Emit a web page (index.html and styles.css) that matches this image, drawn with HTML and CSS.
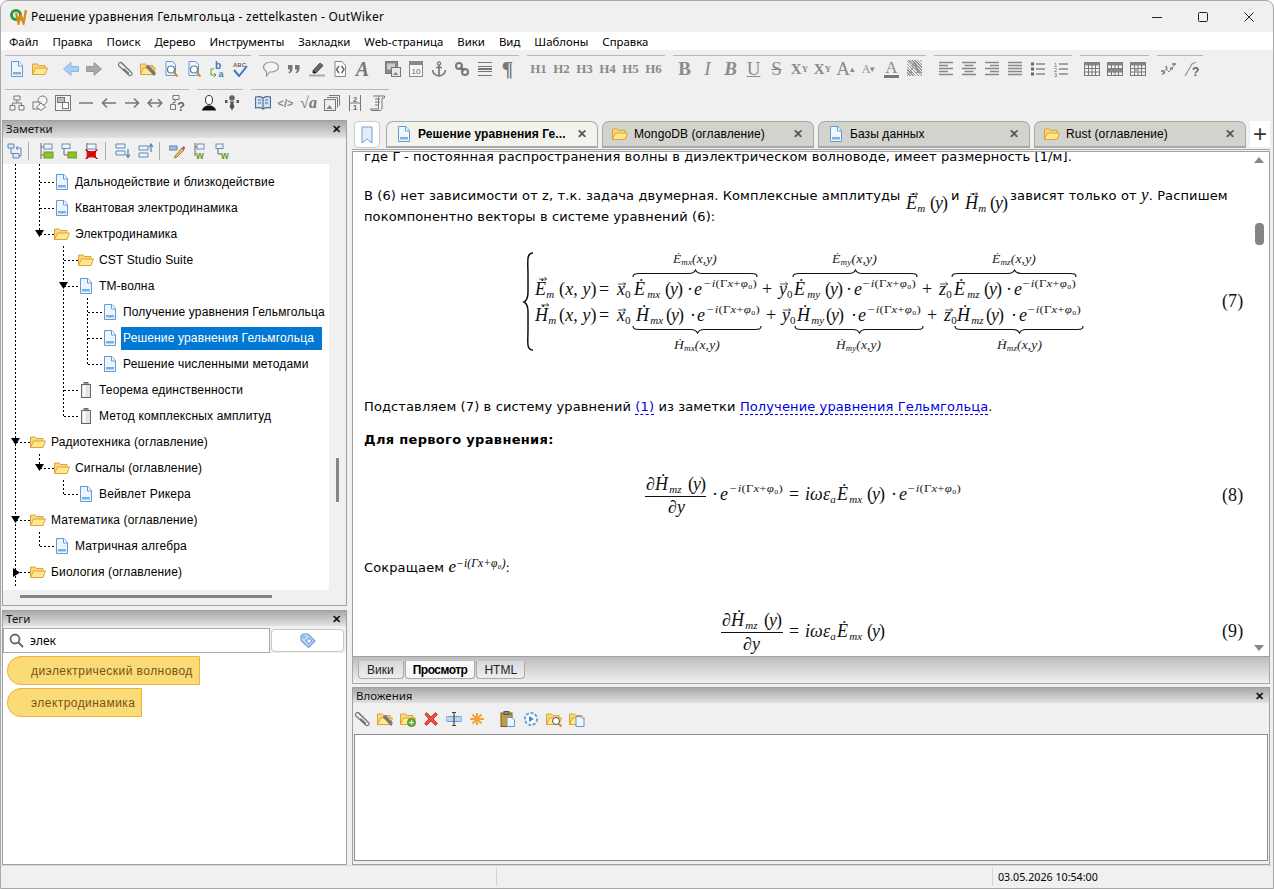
FILE: index.html
```html
<!DOCTYPE html>
<html lang="ru">

<head>
    <meta charset="UTF-8">
    <title>Решение уравнения Гельмгольца - zettelkasten - OutWiker</title>
    <link rel="stylesheet" href="styles.css">
</head>

<body>
    <!-- shared icons -->
    <svg class="defs" width="0" height="0">
        <defs>
            <symbol id="page" viewBox="0 0 16 16"><path d="M2.500 .5h7.500l3.500 4v11h-11z" fill="#eef5fd" stroke="#5f9bd8"/><path d="M9.500 .5v4.500h4" fill="#fff" stroke="#5f9bd8"/><rect x="4" y="11" width="8" height="2.500" fill="#7fb0e2"/></symbol>
            <symbol id="folder" viewBox="0 0 16 16"><path d="M.5 13.500V3h5l1 1.500h6.500V7" fill="#f8d878" stroke="#e0a238"/><path d="M.5 13.500 3.500 7h12L13 13.500z" fill="#ffe88f" stroke="#e0a238"/></symbol>
            <symbol id="cell" viewBox="0 0 16 16"><rect x="6" y=".5" width="4" height="2" fill="#999" stroke="#666"/><rect x="3.500" y="2.500" width="9" height="13" fill="#e4e4e4" stroke="#666"/><rect x="5" y="3.500" width="2.500" height="11" fill="#fbfbfb"/></symbol>
            <symbol id="left" viewBox="0 0 16 16"><path d="M8 1.500 .5 8 8 14.500V10.500h7.500v-5H8z" fill="#a9cdf3" stroke="#8ab8e8"/></symbol>
            <symbol id="right" viewBox="0 0 16 16"><path d="M8 1.500 15.500 8 8 14.500V10.500H.5v-5H8z" fill="#a8a8a8" stroke="#999"/></symbol>
            <symbol id="clip" viewBox="0 0 16 16"><path d="M4 1.500 14.500 11.500c1.500 2-1 4-2.500 2.800L2 5C.5 3 3 .5 5 2l9 9M6.500 7.500l5.500 5" fill="none" stroke="#777" stroke-width="1.200"/></symbol>
            <symbol id="clipfolder" viewBox="0 0 16 16"><use href="#folder"/><path d="M6 5.500l8.500 9M8 4.500l7.500 8M7 5l8 9" stroke="#777" stroke-width="1.300"/></symbol>
            <symbol id="find" viewBox="0 0 16 16"><path d="M3 .5h6.500l3 3v11H3z" fill="#eef5fd" stroke="#5f9bd8"/><circle cx="8" cy="8.500" r="3.500" fill="#fff" stroke="#5f7f9f" stroke-width="1.200"/><path d="M10.500 11 14.500 15.500" stroke="#d98a2b" stroke-width="2"/></symbol>
            <symbol id="bubble" viewBox="0 0 16 16"><path d="M8 1c4.200 0 7.500 2.200 7.500 5s-3.300 5-7.500 5H6.500L3.500 15v-4.500C1.500 9.500.5 7.800.5 6 .5 3.200 3.800 1 8 1z" fill="#f4f4f4" stroke="#999" stroke-width="1.200"/></symbol>
            <symbol id="quote" viewBox="0 0 16 16"><path d="M2 4h4.500v4C6.500 10 5 12 3 12.500L2.500 11.300C3.500 10.800 4 10 4 8.500H2zM9 4h4.500v4c0 2-1.500 4-3.500 4.500l-.5-1.200c1-.5 1.500-1.300 1.500-2.800H9z" fill="#777"/></symbol>
            <symbol id="pen" viewBox="0 0 16 16"><path d="M4 9.500 11 2l3 2.500-7 7.500H4z" fill="#666" stroke="#555"/><path d="M4 9.500V12h3z" fill="#111"/><rect x="0" y="13.500" width="16" height="2" fill="#aaa"/></symbol>
            <symbol id="codepage" viewBox="0 0 16 16"><path d="M3 .5h7l3.500 4v11H3z" fill="#fafafa" stroke="#888"/><path d="M7 5 4.500 8.500 7 12M9.500 5 12 8.500 9.500 12" fill="none" stroke="#666" stroke-width="1.400"/></symbol>
            <symbol id="picture" viewBox="0 0 16 16"><rect x=".5" y=".5" width="12" height="12" fill="#888" stroke="#777"/><rect x="2" y="2.500" width="8" height="6" fill="#ccc"/><rect x="6.500" y="6.500" width="9" height="9" fill="#e8e8e8" stroke="#777"/><path d="M8 14l2.500-3 3 3z" fill="#888"/></symbol>
            <symbol id="calendar" viewBox="0 0 16 16"><rect x="1.500" y=".5" width="13" height="15" fill="#f6f6f6" stroke="#888"/><rect x="1.500" y=".5" width="13" height="3.500" fill="#888"/><text x="8" y="13" class="ic-tx" font-size="8" text-anchor="middle">10</text></symbol>
            <symbol id="anchor" viewBox="0 0 16 16"><circle cx="8" cy="2.500" r="1.600" fill="none" stroke="#777" stroke-width="1.300"/><path d="M8 4v11M5 6.500h6M1.500 9c.5 3.500 3 5.500 6.500 6 3.500-.5 6-2.500 6.500-6" fill="none" stroke="#777" stroke-width="1.700"/></symbol>
            <symbol id="link" viewBox="0 0 16 16"><circle cx="5" cy="5" r="3" fill="none" stroke="#777" stroke-width="2"/><circle cx="11" cy="11" r="3" fill="none" stroke="#777" stroke-width="2"/><path d="M6 6l4 4" stroke="#777" stroke-width="3"/></symbol>
            <symbol id="rule" viewBox="0 0 16 16"><path d="M1 1.500h14M1 5.500h14M1 10.500h14M1 14.500h14" stroke="#777"/><path d="M1 8h14" stroke="#777" stroke-width="2"/></symbol>
            <symbol id="al" viewBox="0 0 16 16"><path d="M1 1.500h14M1 4.500h9M1 7.500h14M1 10.500h9M1 13.500h14" stroke="#888" stroke-width="1.400"/></symbol>
            <symbol id="ac" viewBox="0 0 16 16"><path d="M1 1.500h14M3.500 4.500h9M1 7.500h14M3.500 10.500h9M1 13.500h14" stroke="#888" stroke-width="1.400"/></symbol>
            <symbol id="ar" viewBox="0 0 16 16"><path d="M1 1.500h14M6 4.500h9M1 7.500h14M6 10.500h9M1 13.500h14" stroke="#888" stroke-width="1.400"/></symbol>
            <symbol id="aj" viewBox="0 0 16 16"><path d="M1 1.500h14M1 4.500h14M1 7.500h14M1 10.500h14M1 13.500h14" stroke="#888" stroke-width="1.400"/></symbol>
            <symbol id="ul" viewBox="0 0 16 16"><path d="M6 3h9M6 8h9M6 13h9" stroke="#888" stroke-width="1.400"/><path d="M1 1.500h3v3H1zM1 6.500h3v3H1zM1 11.500h3v3H1z" fill="#666"/></symbol>
            <symbol id="ol" viewBox="0 0 16 16"><path d="M6 3h9M6 8h9M6 13h9" stroke="#888" stroke-width="1.400"/><text x="1" y="5.500" class="ic-tx" font-size="5.500">1</text><text x="1" y="10.500" class="ic-tx" font-size="5.500">2</text><text x="1" y="15.500" class="ic-tx" font-size="5.500">3</text></symbol>
            <symbol id="table" viewBox="0 0 16 16"><rect x=".5" y="1.500" width="15" height="13" fill="#f4f4f4" stroke="#777"/><rect x=".5" y="1.500" width="15" height="3" fill="#888"/><path d="M4.500 2v12M8 2v12M11.500 2v12M1 7.500h14M1 11h14" stroke="#777"/></symbol>
            <symbol id="tablerow" viewBox="0 0 16 16"><use href="#table"/><rect x="1" y="7.500" width="14" height="3.500" fill="#888"/></symbol>
            <symbol id="tablecell" viewBox="0 0 16 16"><use href="#table"/><rect x="4.500" y="7.500" width="3.500" height="3.500" fill="#aaa"/></symbol>
            <symbol id="chart" viewBox="0 0 16 16"><path d="M1 14 5 8l3 3 6-8" fill="none" stroke="#888"/><path d="M0 10h3M5 5l1 3M11 3h4M2 13l2-2M9 7l3 1" stroke="#777" stroke-width="1.500"/></symbol>
            <symbol id="charthelp" viewBox="0 0 16 16"><path d="M1 15 8 3l4-2" fill="none" stroke="#999" stroke-width="1.300"/><text x="8" y="15" class="ic-tx" font-size="12" font-weight="700">?</text></symbol>
            <symbol id="tree" viewBox="0 0 16 16"><path d="M5 1h6v4H5zM1 10.500h5v4.500H1zM10 10.500h5v4.500h-5z" fill="#f4f4f4" stroke="#777"/><path d="M8 5v3M3.500 10.500V8h9v2.500" fill="none" stroke="#777"/></symbol>
            <symbol id="shapes" viewBox="0 0 16 16"><circle cx="10.500" cy="5.500" r="4.500" fill="#f4f4f4" stroke="#777"/><rect x="1" y="7" width="7" height="7" fill="#f4f4f4" stroke="#777"/><path d="M9 8l4.500 4L9 15.500 4.500 12z" fill="#f4f4f4" stroke="#777"/></symbol>
            <symbol id="frames" viewBox="0 0 16 16"><rect x=".5" y=".5" width="15" height="15" fill="#f4f4f4" stroke="#777"/><rect x="2.500" y="2.500" width="7" height="5" fill="#bbb" stroke="#777"/><rect x="7.500" y="7.500" width="6" height="6" fill="#fff" stroke="#777"/></symbol>
            <symbol id="dash" viewBox="0 0 16 16"><path d="M1 8h14" stroke="#777" stroke-width="1.600"/></symbol>
            <symbol id="aleft" viewBox="0 0 16 16"><path d="M1 8h14M6 3.500 1.500 8 6 12.500" fill="none" stroke="#777" stroke-width="1.600"/></symbol>
            <symbol id="aright" viewBox="0 0 16 16"><path d="M1 8h14M10 3.500 14.500 8 10 12.500" fill="none" stroke="#777" stroke-width="1.600"/></symbol>
            <symbol id="both" viewBox="0 0 16 16"><path d="M1 8h14M5 4 1.200 8 5 12M11 4l3.800 4L11 12" fill="none" stroke="#777" stroke-width="1.600"/></symbol>
            <symbol id="treehelp" viewBox="0 0 16 16"><path d="M3 .5h6v4H3zM.5 9.500h5v5h-5z" fill="#f4f4f4" stroke="#777"/><path d="M5 4.500v3H3v2" fill="none" stroke="#777"/><text x="7" y="15.500" class="ic-tx" font-size="13" font-weight="700">?</text></symbol>
            <symbol id="person" viewBox="0 0 16 16"><ellipse cx="8" cy="5" rx="3.500" ry="4.500" fill="#fff" stroke="#333"/><path d="M1 15.500c0-2.500 2-3.500 5-5h4c3 1.500 5 2.500 5 5z" fill="#111"/></symbol>
            <symbol id="tie" viewBox="0 0 16 16"><circle cx="8" cy="3" r="2.800" fill="#666"/><path d="M5.500 6.500h5l-1.200 2 1.200 3-2.500 4-2.500-4 1.200-3z" fill="#555"/><path d="M1 5h2.500v3H1zM12.500 5H15v3h-2.500z" fill="#555"/></symbol>
            <symbol id="book" viewBox="0 0 16 16"><path d="M8 3C6 1.500 3 1.500 .5 2v11c2.500-.5 5.500-.5 7.500 1 2-1.500 5-1.500 7.500-1V2C13 1.500 10 1.500 8 3zM8 3v11" fill="#d4e3f4" stroke="#4e6f94" stroke-width="1.200"/><path d="M3 5h3M3 8h3M10 5h3M10 8h3" stroke="#4e6f94"/></symbol>
            <symbol id="tag" viewBox="0 0 16 16"><path d="M1 3 3 1h5l7 7-6.500 6.500-7.500-7z" fill="#bcd7f2" stroke="#6aa0d8" stroke-width="1.200"/><rect x="7" y="6" width="4" height="4" transform="rotate(45 9 8)" fill="#fff" stroke="#6aa0d8"/><circle cx="4" cy="4" r="1" fill="#fff" stroke="#6aa0d8"/></symbol>
            <symbol id="copies" viewBox="0 0 16 16"><path d="M5 .5h10.500v10" fill="none" stroke="#777"/><path d="M3 2.500h10.500v10" fill="none" stroke="#777"/><rect x=".5" y="4.500" width="11" height="11" fill="#eee" stroke="#777"/><path d="M2.500 14l3-4 3 4z" fill="#888"/></symbol>
            <symbol id="scroll" viewBox="0 0 16 16"><path d="M3 1h11.500v2H12v10c0 1.500-1 2.500-2 2.500H2c-1 0-1.500-.5-1.500-1.500h8V3c0-1 .5-2 1.500-2" fill="#f4f4f4" stroke="#777"/><path d="M5 4h5M5 7h5M5 10h3" stroke="#777"/></symbol>
            <symbol id="steps" viewBox="0 0 16 16"><path d="M2.500 0v16M13.500 0v16M2.500 8h11" stroke="#777"/><text x="8" y="7" class="ic-tx" font-size="7.500" text-anchor="middle" font-weight="700">2</text><text x="8" y="15" class="ic-tx" font-size="7.500" text-anchor="middle" font-weight="700">1</text></symbol>
            <symbol id="nt-swap" viewBox="0 0 16 16"><path d="M1 1h6v4H1zM6 10.500h6v4.500H6z" fill="#dbe9f8" stroke="#5f88b5"/><path d="M4 5v5.500h2M9 5h5v8h-2M11 3l-2 2 2 2" fill="none" stroke="#5f88b5"/></symbol>
            <symbol id="nt-sibling" viewBox="0 0 16 16"><path d="M3 0v16M3 4h3M3 12h3" stroke="#666"/><rect x="6" y="1" width="8" height="5" fill="#eef4fb" stroke="#6c8db0"/><rect x="6" y="9" width="9" height="6" fill="#8dc22b" stroke="#6c9a20"/></symbol>
            <symbol id="nt-child" viewBox="0 0 16 16"><path d="M3 5v7h4" fill="none" stroke="#666"/><rect x="1" y="1" width="8" height="4.500" fill="#eef4fb" stroke="#6c8db0"/><rect x="7" y="9" width="9" height="6" fill="#8dc22b" stroke="#6c9a20"/></symbol>
            <symbol id="nt-del" viewBox="0 0 16 16"><path d="M3 0v16" stroke="#666"/><rect x="3" y="1" width="9" height="5" fill="#eef4fb" stroke="#6c8db0"/><rect x="3" y="8" width="9" height="6.500" fill="#e31212"/><path d="M1.500 6.500 13.500 16M13.500 6.500 1.500 16" stroke="#c00" stroke-width="1.300"/></symbol>
            <symbol id="nt-down" viewBox="0 0 16 16"><path d="M1 1h9v4H1zM1 8h9v4H1z" fill="#eef4fb" stroke="#5f88b5"/><path d="M13 6v7M11 11.500l2 3 2-3" fill="none" stroke="#5f88b5" stroke-width="1.300"/></symbol>
            <symbol id="nt-up" viewBox="0 0 16 16"><path d="M1 3h9v4H1zM1 10h9v4H1z" fill="#eef4fb" stroke="#5f88b5"/><path d="M13 9V2M11 4l2-3 2 3" fill="none" stroke="#5f88b5" stroke-width="1.300"/></symbol>
            <symbol id="nt-edit" viewBox="0 0 16 16"><path d="M0 3h8v4H0z" fill="#9cc1e8" stroke="#5f88b5"/><path d="M6 13 13 5l2 2-7 7-2.500 1z" fill="#f2c14a" stroke="#8a6a20" stroke-width=".8"/><path d="M13 5l2-2 1 2-1 2z" fill="#b12fb1"/></symbol>
            <symbol id="nt-wsib" viewBox="0 0 16 16"><path d="M3 0v13M3 4h2" stroke="#666"/><rect x="5" y="1" width="7" height="5" fill="#eef4fb" stroke="#6c8db0"/><text x="4" y="16" class="ic-tx ic-green" font-size="10" font-weight="700">w</text></symbol>
            <symbol id="nt-wchild" viewBox="0 0 16 16"><path d="M3 5v6h3" fill="none" stroke="#666"/><rect x="1" y="1" width="7" height="4.500" fill="#eef4fb" stroke="#6c8db0"/><text x="6" y="16" class="ic-tx ic-green" font-size="10" font-weight="700">w</text></symbol>
            <symbol id="at-new" viewBox="0 0 16 16"><use href="#folder"/><circle cx="11.500" cy="11.500" r="4" fill="#6bb83a" stroke="#4b8a26"/><path d="M9.500 11.500h4M11.500 9.500v4" stroke="#fff"/></symbol>
            <symbol id="at-del" viewBox="0 0 16 16"><path d="M2 3.500 3.500 1.500 8 6l4.500-4.500L14.500 3.500 10 8l4.500 4.500-2 2L8 10l-4.500 4.500-2-2L6 8z" fill="#ee4d44" stroke="#d33"/></symbol>
            <symbol id="at-rename" viewBox="0 0 16 16"><rect x="0" y="5.500" width="16" height="5" rx="1.500" fill="#bcd7f2" stroke="#6aa0d8"/><path d="M8 1.500v13M6 1.500h4M6 14.500h4" stroke="#444" stroke-width="1.200"/></symbol>
            <symbol id="at-star" viewBox="0 0 16 16"><path d="M8 2v12M1 8h14M3.500 3.500l9 9M12.500 3.500l-9 9" stroke="#f2a33a" stroke-width="2"/></symbol>
            <symbol id="at-paste" viewBox="0 0 16 16"><rect x="1" y="2" width="11" height="13.500" fill="#c79a42" stroke="#7a5a1c"/><rect x="4" y=".5" width="5" height="3" fill="#888" stroke="#555"/><path d="M7 6.500h5l2.500 2.500v6.500H7z" fill="#eef5fd" stroke="#5f9bd8"/></symbol>
            <symbol id="at-run" viewBox="0 0 16 16"><circle cx="8" cy="8" r="6" fill="#fff" stroke="#6aa0d8" stroke-width="2" stroke-dasharray="3 1.500"/><path d="M6 5l5 3-5 3z" fill="#4a86c8"/></symbol>
            <symbol id="at-find" viewBox="0 0 16 16"><use href="#folder"/><circle cx="10" cy="10" r="3.500" fill="#fff" stroke="#555"/><path d="M12.500 12.500l3 3" stroke="#d98a2b" stroke-width="2"/></symbol>
            <symbol id="at-copy" viewBox="0 0 16 16"><use href="#folder"/><path d="M7 5.500h5l3 3v7H7z" fill="#eef5fd" stroke="#5f9bd8"/></symbol>

            <path id="vec" d="M-4 0H3.500M1.500-1.800 3.800 0 1.500 1.800" fill="none" stroke="#111" stroke-width=".7"/>
            <text id="exp" class="m-sup" y="0" textLength="54" lengthAdjust="spacingAndGlyphs">−i<tspan class="up">(Γ</tspan>x<tspan class="up">+</tspan>φ<tspan class="up">₀)</tspan></text>
            <text id="py" class="m m-py"><tspan class="up">(</tspan>y<tspan class="up">)</tspan></text>
            <text id="xy" class="m"><tspan class="up">(</tspan>x, y<tspan class="up">)</tspan></text>
            <path id="bracetop" d="M0 5C0 1.500 3 1.500 6 1.500H56C59 1.500 61 1 62.500 -2 64 1 66 1.500 69 1.500H118C122 1.500 124 1.500 124 5" fill="none" stroke="#111" stroke-width="1.200"/>
            <path id="bracebot" d="M0-5C0-1.500 3-1.500 6-1.500H58C61-1.500 63-1 64.500 2 66-1 68-1.500 71-1.500H122C126-1.500 128-1.500 128-5" fill="none" stroke="#111" stroke-width="1.200"/>
        </defs>
    </svg>

    <div class="window">
        <header class="titlebar">
            <svg class="app-logo" viewBox="0 0 17 17" width="17" height="17"><circle cx="6" cy="7" r="4.500" fill="none" stroke="#2f9a3c" stroke-width="3"/><path d="M6 5 8.500 15 11 8l2.500 7L16 2" fill="none" stroke="#d98a1f" stroke-width="2.400"/></svg>
            <span class="title-text">Решение уравнения Гельмгольца - zettelkasten - OutWiker</span>
            <div class="win-buttons">
                <span class="win-btn"><svg width="12" height="12" viewBox="0 0 12 12"><path d="M1 6.500h10" stroke="#222"/></svg></span>
                <span class="win-btn"><svg width="12" height="12" viewBox="0 0 12 12"><rect x="1.500" y="1.500" width="9" height="9" rx="1" fill="none" stroke="#222"/></svg></span>
                <span class="win-btn"><svg width="12" height="12" viewBox="0 0 12 12"><path d="M1.500 1.500l9 9M10.500 1.500l-9 9" stroke="#222"/></svg></span>
            </div>
        </header>

        <nav class="menubar">
            <span>Файл</span><span>Правка</span><span>Поиск</span><span>Дерево</span><span>Инструменты</span><span>Закладки</span><span>Web-страница</span><span>Вики</span><span>Вид</span><span>Шаблоны</span><span>Справка</span>
        </nav>

        <div class="toolbars">
            <div class="toolrow">
                <div class="tgroup">
                    <span class="tb"><svg><use href="#page"/></svg></span><span class="tb"><svg><use href="#folder"/></svg></span><span class="tb-gap"></span><span class="tb"><svg><use href="#left"/></svg></span><span class="tb"><svg><use href="#right"/></svg></span><span class="tb-gap"></span><span class="tb"><svg><use href="#clip"/></svg></span><span class="tb"><svg><use href="#clipfolder"/></svg></span><span class="tb"><svg><use href="#find"/></svg></span><span class="tb"><svg><use href="#find"/></svg></span><span class="tb"><svg viewBox="0 0 16 16"><text x="6" y="8" class="ic-tx ic-blue" font-size="10" font-weight="700">b</text><text x="9.500" y="15.500" class="ic-tx ic-blue" font-size="9" font-weight="700">a</text><path d="M5 8H2v6h4M5 12l2 2-2 2" fill="none" stroke="#5aa02c"/></svg></span><span class="tb"><svg viewBox="0 0 16 16"><text x="1" y="6" class="ic-tx" font-size="6" font-weight="700">ABC</text><path d="M2 9l5 6 8-10" fill="none" stroke="#3a78c0" stroke-width="2"/></svg></span>
                </div>
                <div class="tgroup">
                    <span class="tb"><svg><use href="#bubble"/></svg></span><span class="tb"><svg><use href="#quote"/></svg></span><span class="tb"><svg><use href="#pen"/></svg></span><span class="tb"><svg><use href="#codepage"/></svg></span><span class="tb glyph bi big cal">A</span><span class="tb-gap wide"></span><span class="tb"><svg><use href="#picture"/></svg></span><span class="tb"><svg><use href="#calendar"/></svg></span><span class="tb"><svg><use href="#anchor"/></svg></span><span class="tb"><svg><use href="#link"/></svg></span><span class="tb"><svg><use href="#rule"/></svg></span><span class="tb glyph big b pil">¶</span>
                </div>
                <div class="tgroup">
                    <span class="tb glyph b">H1</span><span class="tb glyph b">H2</span><span class="tb glyph b">H3</span><span class="tb glyph b">H4</span><span class="tb glyph b">H5</span><span class="tb glyph b">H6</span>
                </div>
                <div class="tgroup">
                    <span class="tb glyph b big">B</span><span class="tb glyph i big">I</span><span class="tb glyph bi big">B</span><span class="tb glyph big u">U</span><span class="tb glyph big s">S</span><span class="tb glyph b xy">X<sub>Y</sub></span><span class="tb glyph b xy">X<sup>Y</sup></span><span class="tb glyph big">A<sup>▴</sup></span><span class="tb glyph small">A<sub>▾</sub></span><span class="tb glyph big colbar">A</span><span class="tb glyph big hatch">A</span>
                </div>
                <div class="tgroup">
                    <span class="tb"><svg><use href="#al"/></svg></span><span class="tb"><svg><use href="#ac"/></svg></span><span class="tb"><svg><use href="#ar"/></svg></span><span class="tb"><svg><use href="#aj"/></svg></span><span class="tb"><svg><use href="#ul"/></svg></span><span class="tb"><svg><use href="#ol"/></svg></span>
                </div>
                <div class="tgroup">
                    <span class="tb"><svg><use href="#table"/></svg></span><span class="tb"><svg><use href="#tablerow"/></svg></span><span class="tb"><svg><use href="#tablecell"/></svg></span>
                </div>
                <div class="tgroup">
                    <span class="tb"><svg><use href="#chart"/></svg></span><span class="tb"><svg><use href="#charthelp"/></svg></span>
                </div>
            </div>
            <div class="toolrow">
                <div class="tgroup">
                    <span class="tb"><svg><use href="#tree"/></svg></span><span class="tb"><svg><use href="#shapes"/></svg></span><span class="tb"><svg><use href="#frames"/></svg></span><span class="tb"><svg><use href="#dash"/></svg></span><span class="tb"><svg><use href="#aleft"/></svg></span><span class="tb"><svg><use href="#aright"/></svg></span><span class="tb"><svg><use href="#both"/></svg></span><span class="tb"><svg><use href="#treehelp"/></svg></span>
                </div>
                <div class="tgroup">
                    <span class="tb"><svg><use href="#person"/></svg></span><span class="tb"><svg><use href="#tie"/></svg></span>
                </div>
                <div class="tgroup">
                    <span class="tb"><svg><use href="#book"/></svg></span><span class="tb glyph code">&lt;/&gt;</span><span class="tb glyph bi sqrt">√a</span><span class="tb"><svg><use href="#copies"/></svg></span><span class="tb"><svg><use href="#steps"/></svg></span><span class="tb"><svg><use href="#scroll"/></svg></span>
                </div>
            </div>
        </div>

        <main class="workspace">
            <aside class="sidebar">
                <section class="panel notes">
                    <div class="panel-head"><span>Заметки</span><span class="close">✕</span></div>
                    <div class="notes-tools">
                        <span class="nb"><svg><use href="#nt-swap"/></svg></span><i class="sep"></i>
                        <span class="nb"><svg><use href="#nt-sibling"/></svg></span><span class="nb"><svg><use href="#nt-child"/></svg></span><span class="nb"><svg><use href="#nt-del"/></svg></span><i class="sep"></i>
                        <span class="nb"><svg><use href="#nt-down"/></svg></span><span class="nb"><svg><use href="#nt-up"/></svg></span><i class="sep"></i>
                        <span class="nb"><svg><use href="#nt-edit"/></svg></span><span class="nb"><svg><use href="#nt-wsib"/></svg></span><span class="nb"><svg><use href="#nt-wchild"/></svg></span>
                    </div>
                    <div class="tree-box">
                        <div class="tree">
                            <svg class="tree-lines" viewBox="3 164 326 426" width="326" height="426">
                                <path class="dots" d="M15.500 164V587M39.500 164V234M40 182.500H54M40 208.500H54M40 234.500H54M63.500 246V416M64 260.500H78M64 286.500H78M64 390.500H78M64 416.500H78M87.500 298V364M88 312.500H102M88 338.500H102M88 364.500H102M16 442.500H30M39.500 454V468M40 468.500H54M63.500 480V494M64 494.500H78M16 520.500H30M39.500 532V546M40 546.500H54M16 572.500H30"/>
                                <path d="M35 230h9l-4.500 7zM59 282h9l-4.500 7zM11 438h9l-4.500 7zM35 464h9l-4.500 7zM11 516h9l-4.500 7zM13 568l7 4.500-7 4.500z" fill="#000"/>
                            </svg>
                            <div class="row d1"><svg><use href="#page"/></svg><span>Дальнодействие и близкодействие</span></div>
                            <div class="row d1"><svg><use href="#page"/></svg><span>Квантовая электродинамика</span></div>
                            <div class="row d1"><svg><use href="#folder"/></svg><span>Электродинамика</span></div>
                            <div class="row d2"><svg><use href="#folder"/></svg><span>CST Studio Suite</span></div>
                            <div class="row d2"><svg><use href="#page"/></svg><span>ТМ-волна</span></div>
                            <div class="row d3"><svg><use href="#page"/></svg><span>Получение уравнения Гельмгольца</span></div>
                            <div class="row d3"><svg><use href="#page"/></svg><span class="selected">Решение уравнения Гельмгольца</span></div>
                            <div class="row d3"><svg><use href="#page"/></svg><span>Решение численными методами</span></div>
                            <div class="row d2"><svg><use href="#cell"/></svg><span>Теорема единственности</span></div>
                            <div class="row d2"><svg><use href="#cell"/></svg><span>Метод комплексных амплитуд</span></div>
                            <div class="row d0"><svg><use href="#folder"/></svg><span>Радиотехника (оглавление)</span></div>
                            <div class="row d1"><svg><use href="#folder"/></svg><span>Сигналы (оглавление)</span></div>
                            <div class="row d2"><svg><use href="#page"/></svg><span>Вейвлет Рикера</span></div>
                            <div class="row d0"><svg><use href="#folder"/></svg><span>Математика (оглавление)</span></div>
                            <div class="row d1"><svg><use href="#page"/></svg><span>Матричная алгебра</span></div>
                            <div class="row d0"><svg><use href="#folder"/></svg><span>Биология (оглавление)</span></div>
                        </div>
                        <div class="vthumb"></div>
                    </div>
                    <div class="hscroll"><div class="hthumb"></div></div>
                </section>

                <section class="panel tags">
                    <div class="panel-head short"><span>Теги</span><span class="close">✕</span></div>
                    <div class="tag-search">
                        <div class="search-input">
                            <svg width="15" height="15" viewBox="0 0 15 15"><circle cx="6" cy="6" r="4.500" fill="none" stroke="#666" stroke-width="1.800"/><path d="M9.500 9.500 14 14" stroke="#666" stroke-width="2"/></svg>
                            <span>элек</span>
                        </div>
                        <span class="tag-btn"><svg width="16" height="16"><use href="#tag"/></svg></span>
                    </div>
                    <div class="tag-list">
                        <span class="pill">диэлектрический волновод</span>
                        <span class="pill">электродинамика</span>
                    </div>
                </section>
            </aside>

            <div class="editor">
                <div class="tabbar">
                    <span class="bookmark"><svg width="14" height="18" viewBox="0 0 14 18"><path d="M2 1h10v16l-5-4-5 4z" fill="#e4eefa" stroke="#6aa0d8"/></svg></span>
                    <div class="tab active"><svg><use href="#page"/></svg><span class="tab-name">Решение уравнения Ге...</span><span class="tab-x">✕</span></div>
                    <div class="tab"><svg><use href="#folder"/></svg><span class="tab-name">MongoDB (оглавление)</span><span class="tab-x">✕</span></div>
                    <div class="tab"><svg><use href="#page"/></svg><span class="tab-name">Базы данных</span><span class="tab-x">✕</span></div>
                    <div class="tab"><svg><use href="#folder"/></svg><span class="tab-name">Rust (оглавление)</span><span class="tab-x">✕</span></div>
                    <span class="tab-add">+</span>
                </div>

                <div class="view">
                    <article class="page">
                        <p class="p-first">где Γ - постоянная распространения волны в диэлектрическом волноводе, имеет размерность [1/м].</p>
                        <p class="p-second">В (6) нет зависимости от z, т.к. задача двумерная. Комплексные амплитуды <svg class="inl" viewBox="0 0 42 24" width="42" height="24"><text class="m" x="1" y="17">Ė<tspan class="m-s" dy="3">m</tspan></text><use href="#py" x="25" y="17"/><use href="#vec" x="9" y="2"/></svg> и <svg class="inl" viewBox="0 0 42 24" width="42" height="24"><text class="m" x="1" y="17">Ḣ<tspan class="m-s" dy="3">m</tspan></text><use href="#py" x="26" y="17"/><use href="#vec" x="10" y="2"/></svg> зависят только от <span class="im">y</span>. Распишем<br>покомпонентно векторы в системе уравнений (6):</p>

                        <svg class="formula f7" viewBox="354 245 898 115">
                            <path d="M534 253C527 253 529 262 529 275V292C529 299 527 301 525 302 527 303 529 305 529 312V329C529 342 527 350 534 350" fill="none" stroke="#111" stroke-width="1.500"/>

                            <use href="#bracetop" x="634" y="272"/><use href="#bracetop" x="794" y="272"/><use href="#bracetop" x="953" y="272"/>
                            <use href="#bracebot" x="634" y="331"/><use href="#bracebot" x="796" y="331"/><use href="#bracebot" x="956" y="331"/>
                            <text class="m-lab" x="674" y="263" textLength="44" lengthAdjust="spacingAndGlyphs">Ė<tspan class="m-ss" dy="2">mx</tspan><tspan dy="-2">(x,y)</tspan></text>
                            <text class="m-lab" x="833" y="263" textLength="45" lengthAdjust="spacingAndGlyphs">Ė<tspan class="m-ss" dy="2">my</tspan><tspan dy="-2">(x,y)</tspan></text>
                            <text class="m-lab" x="993" y="263" textLength="44" lengthAdjust="spacingAndGlyphs">Ė<tspan class="m-ss" dy="2">mz</tspan><tspan dy="-2">(x,y)</tspan></text>
                            <text class="m-lab" x="675" y="349" textLength="46" lengthAdjust="spacingAndGlyphs">Ḣ<tspan class="m-ss" dy="2">mx</tspan><tspan dy="-2">(x,y)</tspan></text>
                            <text class="m-lab" x="837" y="349" textLength="45" lengthAdjust="spacingAndGlyphs">Ḣ<tspan class="m-ss" dy="2">my</tspan><tspan dy="-2">(x,y)</tspan></text>
                            <text class="m-lab" x="998" y="349" textLength="45" lengthAdjust="spacingAndGlyphs">Ḣ<tspan class="m-ss" dy="2">mz</tspan><tspan dy="-2">(x,y)</tspan></text>

                            <text class="m" x="536" y="295">Ė<tspan class="m-s" dy="3">m</tspan></text><use href="#xy" x="560" y="295"/>
                            <use href="#vec" x="544" y="279"/>
                            <text class="m-u" x="600" y="295">=</text>
                            <text class="m" x="618" y="295">x<tspan class="m-su" dy="3">0</tspan></text><use href="#vec" x="623" y="284"/>
                            <text class="m" x="635" y="295">Ė<tspan class="m-s" dx="2" dy="3">mx</tspan></text><use href="#py" x="666" y="295"/>
                            <text class="m-u" x="688" y="295">·</text>
                            <text class="m" x="695" y="295">e</text><use href="#exp" x="704" y="287"/>
                            <text class="m-u" x="763" y="295">+</text>
                            <text class="m" x="780" y="295">y<tspan class="m-su" dy="3">0</tspan></text><use href="#vec" x="785" y="284"/>
                            <text class="m" x="795" y="295">Ė<tspan class="m-s" dx="2" dy="3">my</tspan></text><use href="#py" x="826" y="295"/>
                            <text class="m-u" x="847" y="295">·</text>
                            <text class="m" x="855" y="295">e</text><use href="#exp" x="863" y="287"/>
                            <text class="m-u" x="923" y="295">+</text>
                            <text class="m" x="940" y="295">z<tspan class="m-su" dy="3">0</tspan></text><use href="#vec" x="945" y="284"/>
                            <text class="m" x="955" y="295">Ė<tspan class="m-s" dx="2" dy="3">mz</tspan></text><use href="#py" x="985" y="295"/>
                            <text class="m-u" x="1007" y="295">·</text>
                            <text class="m" x="1015" y="295">e</text><use href="#exp" x="1023" y="287"/>

                            <text class="m" x="536" y="321">Ḣ<tspan class="m-s" dy="3">m</tspan></text><use href="#xy" x="560" y="321"/>
                            <use href="#vec" x="546" y="305"/>
                            <text class="m-u" x="600" y="321">=</text>
                            <text class="m" x="618" y="321">x<tspan class="m-su" dy="3">0</tspan></text><use href="#vec" x="623" y="310"/>
                            <text class="m" x="637" y="321">Ḣ<tspan class="m-s" dx="1" dy="3">mx</tspan></text><use href="#py" x="667" y="321"/>
                            <text class="m-u" x="691" y="321">·</text>
                            <text class="m" x="698" y="321">e</text><use href="#exp" x="707" y="313"/>
                            <text class="m-u" x="767" y="321">+</text>
                            <text class="m" x="783" y="321">y<tspan class="m-su" dy="3">0</tspan></text><use href="#vec" x="788" y="310"/>
                            <text class="m" x="798" y="321">Ḣ<tspan class="m-s" dx="1" dy="3">my</tspan></text><use href="#py" x="827" y="321"/>
                            <text class="m-u" x="852" y="321">·</text>
                            <text class="m" x="859" y="321">e</text><use href="#exp" x="868" y="313"/>
                            <text class="m-u" x="928" y="321">+</text>
                            <text class="m" x="945" y="321">z<tspan class="m-su" dy="3">0</tspan></text><use href="#vec" x="950" y="310"/>
                            <text class="m" x="958" y="321">Ḣ<tspan class="m-s" dx="1" dy="3">mz</tspan></text><use href="#py" x="987" y="321"/>
                            <text class="m-u" x="1012" y="321">·</text>
                            <text class="m" x="1020" y="321">e</text><use href="#exp" x="1028" y="313"/>

                            <text class="m-u" x="1223" y="307">(7)</text>
                        </svg>

                        <p class="p-subst">Подставляем (7) в систему уравнений <a class="lnk">(1)</a> из заметки <a class="lnk">Получение уравнения Гельмгольца</a>.</p>
                        <p class="p-bold"><b>Для первого уравнения:</b></p>

                        <svg class="formula f8" viewBox="354 470 898 55">
                            <text class="m" x="647" y="490">∂Ḣ<tspan class="m-s" dx="1" dy="3">mz</tspan></text><use href="#py" x="689" y="490"/>
                            <path d="M646 496.500H707" stroke="#111"/>
                            <text class="m" x="669" y="513">∂y</text>
                            <text class="m-u" x="713" y="500">·</text>
                            <text class="m" x="721" y="500">e</text><use href="#exp" x="730" y="492"/>
                            <text class="m-u" x="790" y="500">=</text>
                            <text class="m" x="806" y="500">iωε<tspan class="m-s" dy="3">a</tspan></text>
                            <text class="m" x="838" y="500">Ė<tspan class="m-s" dx="1" dy="3">mx</tspan></text><use href="#py" x="868" y="500"/>
                            <text class="m-u" x="892" y="500">·</text>
                            <text class="m" x="900" y="500">e</text><use href="#exp" x="908" y="492"/>
                            <text class="m-u" x="1223" y="501">(8)</text>
                        </svg>

                        <p class="p-cut">Сокращаем <span class="im">e</span><sup class="im-sup">−i(Γx+φ₀)</sup>:</p>

                        <svg class="formula f9" viewBox="354 605 898 52">
                            <text class="m" x="723" y="626">∂Ḣ<tspan class="m-s" dx="1" dy="3">mz</tspan></text><use href="#py" x="765" y="626"/>
                            <path d="M722 632.500H784" stroke="#111"/>
                            <text class="m" x="744" y="650">∂y</text>
                            <text class="m-u" x="790" y="637">=</text>
                            <text class="m" x="806" y="637">iωε<tspan class="m-s" dy="3">a</tspan></text>
                            <text class="m" x="838" y="637">Ė<tspan class="m-s" dx="1" dy="3">mx</tspan></text><use href="#py" x="868" y="637"/>
                            <text class="m-u" x="1223" y="637">(9)</text>
                        </svg>
                    </article>
                    <div class="view-scroll">
                        <span class="arrow up"></span>
                        <span class="vs-thumb"></span>
                        <span class="arrow down"></span>
                    </div>
                </div>

                <div class="mode-tabs">
                    <span class="mode first">Вики</span>
                    <span class="mode on">Просмотр</span>
                    <span class="mode">HTML</span>
                </div>

                <section class="panel attach">
                    <div class="panel-head short"><span>Вложения</span><span class="close">✕</span></div>
                    <div class="attach-tools">
                        <span class="ab"><svg><use href="#clip"/></svg></span><span class="ab"><svg><use href="#clipfolder"/></svg></span><span class="ab"><svg><use href="#at-new"/></svg></span><span class="ab"><svg><use href="#at-del"/></svg></span><span class="ab"><svg><use href="#at-rename"/></svg></span><span class="ab"><svg><use href="#at-star"/></svg></span><span class="ab-gap"></span><span class="ab"><svg><use href="#at-paste"/></svg></span><span class="ab"><svg><use href="#at-run"/></svg></span><span class="ab"><svg><use href="#at-find"/></svg></span><span class="ab"><svg><use href="#at-copy"/></svg></span>
                    </div>
                    <div class="attach-list"></div>
                </section>
            </div>
        </main>

        <footer class="statusbar">
            <span class="st st1"></span>
            <span class="st st2"></span>
            <span class="st st3">03.05.2026 10:54:00</span>
        </footer>
    </div>
</body>

</html>
```

FILE: styles.css
```css
* {
    box-sizing: border-box;
}

html, body {
    margin: 0;
    padding: 0;
    height: 100%;
    overflow: hidden;
    background-color: #fff;
}

.defs {
    position: absolute;
}

.ic-tx {
    font-family: 'Liberation Sans', sans-serif;
    fill: #666;
}

.ic-blue { fill: #3a78c0; }
.ic-green { fill: #6c9a20; }

.window {
    width: 1274px;
    height: 889px;
    display: flex;
    flex-direction: column;
    background-color: #f0f0f0;
    border: 1px solid #a8a8a8;
    border-radius: 8px 8px 0 0;
    font-family: 'Noto Sans', 'Open Sans', sans-serif;
    font-size: 12px;
    color: #000;
    overflow: hidden;
}

/* title + menu */
.titlebar {
    height: 31px;
    display: flex;
    align-items: center;
    padding-left: 9px;
    flex: none;
}

.title-text {
    margin-left: 4px;
    white-space: nowrap;
    letter-spacing: .27px;
}

.win-buttons {
    margin-left: auto;
    display: flex;
    margin-right: 1px;
}

.win-btn {
    width: 46px;
    display: flex;
    justify-content: center;
}

.menubar {
    height: 18px;
    flex: none;
    background-color: #fff;
    display: flex;
    gap: 14px;
    padding-left: 8px;
    align-items: center;
    white-space: nowrap;
    font-size: 11.400px;
}

/* toolbars */
.toolbars {
    height: 70px;
    flex: none;
    padding-top: 5px;
}

.toolrow {
    display: flex;
    gap: 8px;
    padding-left: 4px;
    height: 34px;
}

.tgroup {
    display: flex;
    border-top: 1px solid #b8b8b8;
    padding-top: 4px;
    height: 30px;
}

.tb {
    width: 23px;
    height: 18px;
    display: flex;
    align-items: center;
    justify-content: center;
    flex: none;
}

.tb svg {
    width: 16px;
    height: 16px;
}

.tb-gap {
    width: 8px;
    flex: none;
}

.tb-gap.wide {
    width: 7px;
}

.glyph {
    font-family: 'Liberation Serif', serif;
    font-size: 13px;
    color: #8a8a8a;
    white-space: nowrap;
}

.glyph sub, .glyph sup {
    font-size: 9px;
    line-height: 0;
}

.glyph.b { font-weight: bold; }
.glyph.i { font-style: italic; }
.glyph.bi { font-weight: bold; font-style: italic; }
.glyph.big { font-size: 19px; }
.glyph.small { font-size: 12px; }
.glyph.xy { font-size: 15px; }
.glyph.cal { font-size: 20px; color: #777; }
.glyph.pil { font-size: 21px; color: #777; }
.glyph.sqrt { font-size: 16px; color: #777; }
.glyph.u { text-decoration: underline; text-decoration-thickness: 1px; }
.glyph.s { text-decoration: line-through; text-decoration-thickness: 1px; }
.glyph.code { font-family: 'Liberation Sans', sans-serif; font-size: 11px; font-weight: bold; }
.glyph.colbar { border-bottom: 3px solid #777; width: 15px; margin: 0 4px; height: 18px; line-height: 15px; font-size: 17px; }
.glyph.hatch { background: repeating-linear-gradient(45deg, #999 0 1px, #eee 1px 2px); width: 15px; margin: 0 4px; height: 16px; font-size: 16px; }

/* main area */
.workspace {
    flex: 1;
    display: flex;
    min-height: 0;
}

.sidebar {
    width: 345px;
    margin-left: 1px;
    display: flex;
    flex-direction: column;
    flex: none;
    gap: 4px;
}

.panel {
    border: 1px solid #a0a0a0;
    display: flex;
    flex-direction: column;
    min-height: 0;
}

.panel-head {
    height: 17px;
    flex: none;
    display: flex;
    justify-content: space-between;
    align-items: center;
    padding: 0 5px 3px 3px;
    font-size: 11.500px;
    background: linear-gradient(#a9a9a9, #e2e2e2);
    color: #111;
}

.panel-head.short {
    height: 15px;
    padding-bottom: 0;
}

.close {
    font-size: 11px;
    font-weight: bold;
    color: #111;
}

.notes {
    height: 486px;
    flex: none;
}

.notes-tools {
    height: 26px;
    flex: none;
    display: flex;
    align-items: center;
}

.nb {
    width: 23px;
    height: 16px;
    display: flex;
    justify-content: center;
    flex: none;
}

.nb svg {
    width: 16px;
    height: 16px;
}

.sep {
    width: 1px;
    height: 18px;
    background-color: #aaa;
    margin: 0 5px 0 2px;
    flex: none;
}

.tree-box {
    height: 426px;
    flex: none;
    position: relative;
    display: flex;
}

.tree {
    width: 326px;
    height: 426px;
    background-color: #fff;
    padding-top: 5px;
    position: relative;
    overflow: hidden;
    font-family: 'Liberation Sans', sans-serif;
    font-size: 12px;
    letter-spacing: .15px;
    flex: none;
}

.tree-lines {
    position: absolute;
    top: 0;
    left: 0;
}

.dots {
    fill: none;
    stroke: #000;
    stroke-dasharray: 2 2;
}

.row {
    height: 26px;
    display: flex;
    align-items: center;
    white-space: nowrap;
    position: relative;
}

.row svg {
    width: 16px;
    height: 16px;
    flex: none;
}

.row span {
    margin-left: 3px;
    padding: 4px 2px;
}

.row .selected {
    background-color: #0078d4;
    color: #fff;
    width: 201px;
    height: 23px;
    line-height: 15px;
}

.d0 { padding-left: 27px; }
.d1 { padding-left: 51px; }
.d2 { padding-left: 75px; }
.d3 { padding-left: 99px; }

.vthumb {
    position: absolute;
    left: 333px;
    top: 294px;
    width: 3px;
    height: 44px;
    background-color: #858585;
}

.hscroll {
    flex: 1;
    padding: 5px 0 0 17px;
}

.hthumb {
    width: 252px;
    height: 3px;
    background-color: #858585;
}

.tags {
    flex: 1;
    background-color: #fff;
}

.tag-search {
    display: flex;
    height: 27px;
    gap: 1px;
    flex: none;
    background-color: #f0f0f0;
    padding-top: 2px;
}

.search-input {
    width: 267px;
    border: 1px solid #aaa;
    background-color: #fff;
    display: flex;
    align-items: center;
    gap: 6px;
    padding-left: 5px;
}

.tag-btn {
    width: 73px;
    margin: 1px 0;
    background-color: #fff;
    border: 1px solid #c8c8c8;
    border-radius: 4px;
    display: flex;
    align-items: center;
    justify-content: center;
}

.tag-list {
    padding: 3px 4px;
    display: flex;
    flex-direction: column;
    align-items: flex-start;
    gap: 3px;
    font-family: 'Liberation Sans', sans-serif;
    letter-spacing: .45px;
}

.pill {
    height: 29px;
    display: flex;
    align-items: center;
    padding: 0 6px 0 23px;
    background-color: #fbda78;
    border: 1px solid #f0b040;
    border-radius: 14px 0 0 14px;
    color: #7a5214;
}

/* right side */
.editor {
    flex: 1;
    display: flex;
    flex-direction: column;
    min-width: 0;
    padding: 0 3px 0 5px;
}

.tabbar {
    height: 30px;
    flex: none;
    display: flex;
    padding-top: 1px;
    font-family: 'Liberation Sans', sans-serif;
    gap: 4px;
    align-items: flex-start;
    border-bottom: 1px solid #a8a8a8;
}

.bookmark {
    width: 26px;
    height: 27px;
    margin: 0 2px;
    background-color: #fff;
    border: 1px solid #ccc;
    border-radius: 4px;
    display: flex;
    align-items: center;
    justify-content: center;
    flex: none;
}

.tab {
    width: 212px;
    height: 27px;
    display: flex;
    align-items: center;
    background-color: #d3d3cd;
    border: 1px solid #a8a8a8;
    border-bottom-width: 2px;
    border-radius: 7px 7px 0 0;
    padding-left: 9px;
    flex: none;
    letter-spacing: .1px;
}

.tab svg {
    width: 16px;
    height: 16px;
    flex: none;
}

.tab.active {
    background-color: #f3f3ee;
}

.tab.active .tab-name {
    font-weight: bold;
}

.tab-name {
    margin-left: 6px;
    white-space: nowrap;
    flex: 1;
}

.tab-x {
    font-size: 12px;
    font-weight: bold;
    color: #555;
    margin-right: 10px;
}

.tab-add {
    font-family: 'Liberation Sans', sans-serif;
    font-size: 24px;
    line-height: 26px;
    color: #333;
    background-color: #fff;
    width: 24px;
    text-align: center;
}

.view {
    height: 506px;
    flex: none;
    display: flex;
    background-color: #fff;
    border: 1px solid #a0a0a0;
    margin-top: 1px;
    overflow: hidden;
}

.page {
    flex: 1;
    min-width: 0;
    overflow: hidden;
    font-family: 'DejaVu Sans', sans-serif;
    font-size: 13px;
    line-height: 19px;
    letter-spacing: .12px;
    color: #000;
}

.page p {
    margin: 0;
    padding-left: 11px;
    white-space: nowrap;
}

.page b {
    letter-spacing: .32px;
}

.p-first { margin-top: -5px !important; }
.p-second { margin-top: 20px !important; height: 38px; }
.p-subst { margin-top: 37px !important; }
.p-bold { margin-top: 14px !important; }
.p-cut { margin-top: 33px !important; }

.formula {
    display: block;
    width: 898px;
}

.inl {
    vertical-align: -7px;
    margin: -9px 0;
    overflow: visible;
}

.f7 { height: 115px; margin-top: 21px; }
.f8 { height: 55px; margin-top: 21px; }
.f9 { height: 52px; margin-top: 28px; }

.lnk {
    color: #0000e0;
    border-bottom: 1px dashed #0000e0;
}

.im {
    font-family: 'Liberation Serif', serif;
    font-style: italic;
    font-size: 17px;
    line-height: 0;
}

.im-sup {
    font-family: 'Liberation Serif', serif;
    font-style: italic;
    font-size: 11.500px;
    line-height: 0;
}

.m {
    font-family: 'Liberation Serif', serif;
    font-style: italic;
    font-size: 18px;
    fill: #111;
}

.m-py {
    letter-spacing: -1px;
}

.up {
    font-style: normal;
}

.m-u {
    font-family: 'Liberation Serif', serif;
    font-size: 18px;
    fill: #111;
}

.m-s {
    font-size: 11px;
}

.m-su {
    font-size: 11px;
    font-style: normal;
}

.m-ss {
    font-size: 8px;
}

.m-lab {
    font-family: 'Liberation Serif', serif;
    font-style: italic;
    font-size: 12px;
    fill: #222;
}

.m-sup {
    font-family: 'Liberation Serif', serif;
    font-style: italic;
    font-size: 11px;
    fill: #222;
}

.view-scroll {
    width: 16px;
    flex: none;
    display: flex;
    flex-direction: column;
    align-items: center;
    padding: 5px 0;
    margin: 0 2px 0 -6px;
}

.arrow {
    width: 0;
    height: 0;
    border-left: 5px solid transparent;
    border-right: 5px solid transparent;
    flex: none;
}

.arrow.up { border-bottom: 6px solid #888; }
.arrow.down { border-top: 6px solid #888; margin-top: auto; }

.vs-thumb {
    width: 9px;
    height: 22px;
    background-color: #858585;
    border-radius: 4px;
    margin-top: 60px;
}

.mode-tabs {
    height: 27px;
    flex: none;
    display: flex;
    padding: 4px 0 0 5px;
    background: linear-gradient(#bdbdbd, #f0f0f0);
    border-bottom: 1px solid #a8a8a8;
    border-left: 1px solid #a8a8a8;
    border-right: 1px solid #a8a8a8;
    margin-bottom: 3px;
    font-family: 'Liberation Sans', sans-serif;
}

.mode {
    height: 18px;
    padding: 0 7px;
    border: 1px solid #aaa;
    border-top: none;
    border-radius: 0 0 4px 4px;
    background: linear-gradient(#d8d8d8, #eee);
    display: flex;
    align-items: center;
    color: #222;
}

.mode.first {
    padding: 0 9px 0 8px;
}

.mode.on {
    background-color: #f8f8f8;
    background-image: none;
    font-weight: bold;
    letter-spacing: -.5px;
    color: #000;
    margin: 0 1px;
}

.attach {
    flex: 1;
}

.attach-tools {
    height: 31px;
    flex: none;
    display: flex;
    align-items: center;
    margin-left: -3px;
}

.ab {
    width: 23px;
    display: flex;
    justify-content: center;
    flex: none;
}

.ab svg {
    width: 16px;
    height: 16px;
}

.ab-gap {
    width: 8px;
    flex: none;
}

.attach-list {
    flex: 1;
    background-color: #fff;
    border: 1px solid #8c8c8c;
    margin: 0 1px 3px 1px;
}

/* status */
.statusbar {
    height: 23px;
    flex: none;
    display: flex;
    align-items: center;
    border-top: 1px solid #d8d8d8;
}

.st {
    height: 18px;
    display: flex;
    align-items: center;
}

.st1 { width: 496px; border-right: 1px solid #d4d4d4; }
.st2 { width: 496px; border-right: 1px solid #d4d4d4; }
.st3 { padding-left: 5px; font-size: 10.700px; }
```
